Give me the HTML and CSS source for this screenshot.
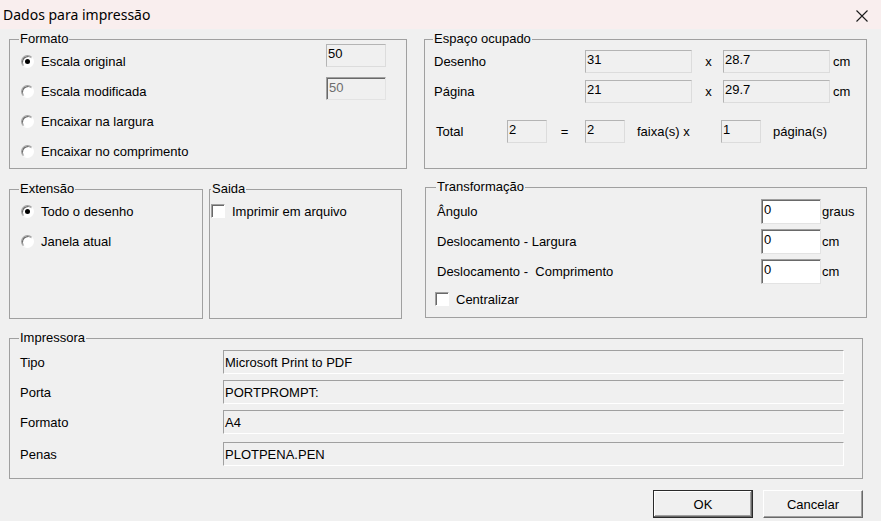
FILE: index.html
```html
<!DOCTYPE html>
<html lang="pt">
<head>
    <meta charset="UTF-8">
    <title>Dados para impressão</title>
    <link rel="stylesheet" href="styles.css">
</head>
<body>
    <!-- Window title -->
    <div class="titlebar">
        <span class="title">Dados para impressão</span>
        <span class="close">
            <svg width="12" height="12" viewBox="0 0 12 12"><path d="M0.5 0.5 L11.5 11.5 M11.5 0.5 L0.5 11.5" stroke="#1a1a1a" stroke-width="1.1" fill="none"/></svg>
        </span>
    </div>

    <div class="dialog">
        <!-- Top row -->
        <div class="row">
            <fieldset class="group formato">
                <legend>Formato</legend>
                <div class="formato-body">
                    <div class="options">
                        <div class="opt"><span class="radio checked"></span>Escala original</div>
                        <div class="opt"><span class="radio"></span>Escala modificada</div>
                        <div class="opt"><span class="radio"></span>Encaixar na largura</div>
                        <div class="opt"><span class="radio"></span>Encaixar no comprimento</div>
                    </div>
                    <div class="scale-fields">
                        <div class="field flat small">50</div>
                        <div class="field sunken small disabled">50</div>
                    </div>
                </div>
            </fieldset>

            <fieldset class="group espaco">
                <legend>Espaço ocupado</legend>
                <div class="espaco-body">
                    <div class="size-row">
                        <span class="size-label">Desenho</span>
                        <div class="field flat wide">31</div>
                        <span class="times">x</span>
                        <div class="field flat wide">28.7</div>
                        <span class="unit">cm</span>
                    </div>
                    <div class="size-row">
                        <span class="size-label">Página</span>
                        <div class="field flat wide">21</div>
                        <span class="times">x</span>
                        <div class="field flat wide">29.7</div>
                        <span class="unit">cm</span>
                    </div>
                    <div class="size-row total-row">
                        <span class="total-label">Total</span>
                        <div class="field flat tiny">2</div>
                        <span class="equals">=</span>
                        <div class="field flat tiny">2</div>
                        <span class="faixa">faixa(s) x</span>
                        <div class="field flat tiny">1</div>
                        <span class="paginas">página(s)</span>
                    </div>
                </div>
            </fieldset>
        </div>

        <!-- Middle row -->
        <div class="row row-mid">
            <fieldset class="group extensao">
                <legend>Extensão</legend>
                <div class="options">
                    <div class="opt"><span class="radio checked"></span>Todo o desenho</div>
                    <div class="opt"><span class="radio"></span>Janela atual</div>
                </div>
            </fieldset>

            <fieldset class="group saida">
                <legend>Saida</legend>
                <div class="check-row"><span class="checkbox"></span>Imprimir em arquivo</div>
            </fieldset>

            <fieldset class="group transf">
                <legend>Transformação</legend>
                <div class="transf-body">
                    <div class="transf-row">
                        <span class="transf-label">Ângulo</span>
                        <div class="field edit">0</div>
                        <span class="transf-unit">graus</span>
                    </div>
                    <div class="transf-row">
                        <span class="transf-label">Deslocamento - Largura</span>
                        <div class="field edit">0</div>
                        <span class="transf-unit">cm</span>
                    </div>
                    <div class="transf-row">
                        <span class="transf-label">Deslocamento -&nbsp; Comprimento</span>
                        <div class="field edit">0</div>
                        <span class="transf-unit">cm</span>
                    </div>
                    <div class="check-row centralizar"><span class="checkbox"></span>Centralizar</div>
                </div>
            </fieldset>
        </div>

        <!-- Printer -->
        <fieldset class="group impressora">
            <legend>Impressora</legend>
            <div class="printer-body">
                <div class="printer-row">
                    <span class="printer-label">Tipo</span>
                    <div class="field line">Microsoft Print to PDF</div>
                </div>
                <div class="printer-row">
                    <span class="printer-label">Porta</span>
                    <div class="field line">PORTPROMPT:</div>
                </div>
                <div class="printer-row">
                    <span class="printer-label">Formato</span>
                    <div class="field line">A4</div>
                </div>
                <div class="printer-row last">
                    <span class="printer-label">Penas</span>
                    <div class="field line">PLOTPENA.PEN</div>
                </div>
            </div>
        </fieldset>

        <!-- Buttons -->
        <div class="buttons">
            <button class="btn default">OK</button>
            <button class="btn">Cancelar</button>
        </div>
    </div>
</body>
</html>
```

FILE: styles.css
```css
/* General page settings */
* {
    box-sizing: border-box;
}

body {
    margin: 0;
    background: #f0f0f0;
    font-family: "Liberation Sans", Arial, sans-serif;
    font-size: 13px;
    color: #000;
}

/* Title bar */
.titlebar {
    height: 29px;
    background: #f9eeee;
    display: flex;
    align-items: center;
    justify-content: space-between;
    padding: 0 13px 0 3px;
}

.title {
    font-family: "Noto Sans", "Open Sans", sans-serif;
    font-size: 14px;
}

.close {
    display: flex;
    margin-top: 2px;
}

/* Dialog layout */
.dialog {
    padding: 3px 0 0 9px;
}

.row {
    display: flex;
    align-items: flex-start;
}

.row-mid {
    margin-top: 11px;
}

/* Group boxes */
.group {
    margin: 0;
    padding: 0;
    border: 1px solid #a0a0a0;
    min-width: 0;
}

.group legend {
    font-size: 13px;
    line-height: 14px;
    padding: 0 1px;
    margin-left: 9px;
}

/* Text fields */
.field {
    height: 23px;
    padding: 1px 0 0 1px;
    line-height: 15px;
    white-space: nowrap;
    background: #f0f0f0;
}

.field.flat {
    border: 1px solid #b4b4b4;
    border-right-color: #dcdcdc;
    border-bottom-color: #dcdcdc;
}

.field.sunken {
    border: 1px solid #e3e3e3;
    border-top-color: #a0a0a0;
    border-left-color: #a0a0a0;
    box-shadow: inset 1px 1px 0 #696969;
    padding-left: 2px;
    padding-top: 2px;
}

.field.disabled {
    color: #6d6d6d;
}

.field.edit {
    width: 60px;
    height: 25px;
    background: #fff;
    border: 1px solid #e3e3e3;
    border-top-color: #a0a0a0;
    border-left-color: #a0a0a0;
    box-shadow: inset 1px 1px 0 #696969;
    padding: 2px 0 0 2px;
}

.field.line {
    width: 621px;
    height: 24px;
    border: 1px solid #fff;
    border-top-color: #a0a0a0;
    border-left-color: #a0a0a0;
    padding: 4px 0 0 1px;
}

.small { width: 60px; }
.wide { width: 107px; }
.tiny { width: 40px; }

/* Radio buttons */
.options {
    display: flex;
    flex-direction: column;
}

.opt {
    height: 30px;
    display: flex;
    align-items: center;
}

.radio {
    position: relative;
    width: 13px;
    height: 13px;
    margin-right: 7px;
    border-radius: 50%;
    background: #fff;
    border: 1px solid #fff;
    border-top-color: #a0a0a0;
    border-left-color: #a0a0a0;
    box-shadow: inset 1px 1px 0 #696969;
}

.radio.checked::after {
    content: "";
    position: absolute;
    left: 3px;
    top: 3px;
    width: 5px;
    height: 5px;
    border-radius: 50%;
    background: #000;
}

/* Check boxes */
.check-row {
    display: flex;
    align-items: center;
    height: 30px;
}

.checkbox {
    width: 14px;
    height: 14px;
    margin-right: 7px;
    background: #fff;
    border: 1px solid #fff;
    border-top-color: #a0a0a0;
    border-left-color: #a0a0a0;
    box-shadow: inset 1px 1px 0 #696969;
}

/* Formato */
.formato {
    width: 398px;
    height: 137px;
}

.formato-body {
    display: flex;
    justify-content: space-between;
    padding: 0 20px 0 11px;
}

.scale-fields {
    display: flex;
    flex-direction: column;
    gap: 10px;
    margin-top: -2px;
}

/* Espaço ocupado */
.espaco {
    width: 443px;
    height: 137px;
    margin-left: 17px;
}

.espaco legend {
    margin-left: 8px;
}

.espaco-body {
    padding-left: 9px;
}

.size-row {
    height: 30px;
    display: flex;
    align-items: center;
}

.size-label {
    width: 151px;
}

.times {
    width: 31px;
    text-align: center;
    padding-left: 2px;
}

.unit {
    margin-left: 3px;
}

.total-row {
    margin-top: 10px;
}

.total-label {
    width: 73px;
    padding-left: 2px;
}

.equals {
    width: 38px;
    text-align: center;
    padding-right: 3px;
}

.faixa {
    width: 96px;
    padding-left: 12px;
}

.paginas {
    padding-left: 12px;
}

/* Extensão / Saida */
.extensao {
    width: 194px;
    height: 137px;
    margin-top: 2px;
}

.extensao .options {
    padding-left: 11px;
}

.saida {
    width: 193px;
    height: 137px;
    margin-top: 2px;
    margin-left: 6px;
}

.saida legend {
    margin-left: 1px;
}

.saida .check-row {
    padding-left: 1px;
}

/* Transformação */
.transf {
    width: 442px;
    height: 138px;
    margin-left: 23px;
}

.transf legend {
    margin-left: 10px;
}

.transf-body {
    padding: 2px 0 0 11px;
}

.transf-row {
    height: 30px;
    display: flex;
    align-items: center;
}

.transf-label {
    width: 324px;
}

.transf-unit {
    margin-left: 1px;
}

.centralizar {
    height: 26px;
    margin-left: -2px;
}

/* Impressora */
.impressora {
    width: 854px;
    height: 148px;
    margin-top: 12px;
}

.printer-body {
    padding: 5px 0 0 10px;
}

.printer-row {
    display: flex;
    align-items: center;
    margin-bottom: 6px;
}

.printer-row.last {
    margin-top: 8px;
}

.printer-label {
    width: 203px;
}

/* Buttons */
.buttons {
    width: 854px;
    display: flex;
    justify-content: flex-end;
    gap: 10px;
    margin-top: 11px;
}

.btn {
    width: 100px;
    height: 28px;
    font-family: "Liberation Sans", Arial, sans-serif;
    font-size: 13px;
    color: #000;
    background: #f0f0f0;
    border: 1px solid #696969;
    border-top-color: #fff;
    border-left-color: #fff;
    box-shadow: inset -1px -1px 0 #a0a0a0;
    padding: 0;
}

.btn.default {
    border: 1px solid #2a2a2a;
    box-shadow: inset -1px -1px 0 #696969, inset 1px 1px 0 #fff, inset -2px -2px 0 #a0a0a0;
}
```
